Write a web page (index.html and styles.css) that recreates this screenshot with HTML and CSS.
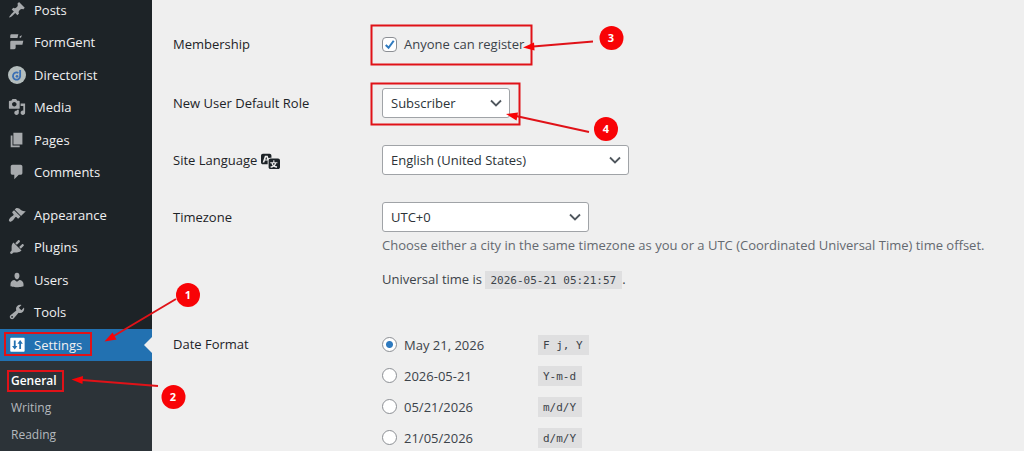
FILE: index.html
```html
<!DOCTYPE html>
<html lang="en">
<head>
<meta charset="utf-8">
<title>General Settings</title>
<link rel="stylesheet" href="styles.css">
</head>
<body>
<div class="page">
  <nav class="sidebar" aria-label="Main menu">
    <ul class="menu">
      <li><a href="#"><svg class="icon" viewBox="0 0 20 20"><path d="M10.44 3.02l1.82-1.82 6.36 6.35-1.83 1.82c-1.05-.68-2.48-.57-3.41.36l-.75.75c-.92.93-1.04 2.35-.35 3.41l-1.83 1.82-2.41-2.41-2.8 2.79c-.42.42-3.38 2.71-3.8 2.29s1.86-3.39 2.28-3.81l2.79-2.79L4.1 9.36l1.83-1.82c1.05.69 2.48.57 3.4-.36l.75-.75c.93-.92 1.05-2.35.36-3.41z"/></svg>Posts</a></li>
      <li><a href="#"><svg class="icon" viewBox="0 0 20 20"><path d="M4 1.500H11.500L10.500 5.500H2.500V3Q2.500 1.500 4 1.500zM13 3.500L15.500 2.500L14.500 5L13 5.500zM4 8.500H17L16 13H8.500V16.500Q8.500 18 7 18H2.500V10Q2.500 8.500 4 8.500z"/></svg>FormGent</a></li>
      <li><a href="#"><svg class="icon" viewBox="0 0 20 20"><circle class="disc" cx="10" cy="10" r="10"/><path class="ring" d="M13.500 4.500V11.500A4 4 0 1 1 11.500 7.700"/><circle class="blue" cx="10" cy="11.500" r="1.500"/></svg>Directorist</a></li>
      <li><a href="#"><svg class="icon" viewBox="0 0 20 20"><path d="M13 11V4c0-.55-.45-1-1-1h-1.670L9 1H5L3.670 3H2c-.55 0-1 .45-1 1v7c0 .55.45 1 1 1h10c.55 0 1-.45 1-1zM7 4.500c1.380 0 2.500 1.120 2.500 2.500S8.380 9.500 7 9.500 4.500 8.380 4.500 7 5.620 4.500 7 4.500zM14 6h5v10.500c0 1.380-1.120 2.500-2.500 2.500S14 17.880 14 16.500s1.120-2.500 2.500-2.500c.17 0 .34.020.5.050V9h-3V6zm-4 8.050V13h2v3.500c0 1.380-1.120 2.500-2.500 2.500S7 17.880 7 16.500 8.120 14 9.500 14c.17 0 .34.020.5.050z"/></svg>Media</a></li>
      <li><a href="#"><svg class="icon" viewBox="0 0 20 20"><path d="M6 15V2h10v13H6zm-1 1h8v2H3V5h2v11z"/></svg>Pages</a></li>
      <li><a href="#"><svg class="icon" viewBox="0 0 20 20"><path d="M5 2h9c1.100 0 2 .9 2 2v7c0 1.100-.9 2-2 2h-2l-5 5v-5H5c-1.100 0-2-.9-2-2V4c0-1.100.9-2 2-2z"/></svg>Comments</a></li>
    </ul>
    <ul class="menu">
      <li><a href="#"><svg class="icon" viewBox="0 0 20 20"><path d="M14.480 11.060L7.410 3.990l1.500-1.500c.5-.56 2.300-.47 3.510.32 1.210.8 1.430 1.280 2.910 2.100 1.180.64 2.450 1.260 4.450.85zm-.71.71L6.700 4.700 4.930 6.470c-.39.39-.39 1.020 0 1.410l1.060 1.060c.39.39.39 1.030 0 1.420-.6.600-1.430 1.110-2.210 1.690-.35.26-.7.530-1.010.84C1.430 14.230.400 16.080 1.400 17.070c.99 1 2.840-.03 4.180-1.360.31-.31.580-.66.850-1.020.57-.78 1.080-1.610 1.690-2.210.39-.39 1.020-.39 1.410 0l1.060 1.060c.39.39 1.020.39 1.410 0z"/></svg>Appearance</a></li>
      <li><a href="#"><svg class="icon" viewBox="0 0 20 20"><path d="M13.110 4.360L9.870 7.600 8 5.730l3.240-3.240c.35-.34 1.050-.2 1.560.32.520.51.660 1.210.31 1.550zm-8 1.770l.91-1.120 9.010 9.010-1.190.84c-.71.71-2.630 1.160-3.820 1.160H6.140L4.900 17.260c-.59.59-1.540.59-2.120 0-.59-.58-.59-1.530 0-2.120l1.240-1.240v-3.880c0-1.130.4-3.190 1.090-3.890zm7.260 3.970l3.240-3.240c.34-.35 1.040-.21 1.550.31.520.51.660 1.210.31 1.550l-3.240 3.250z"/></svg>Plugins</a></li>
      <li><a href="#"><svg class="icon" viewBox="0 0 20 20"><path d="M10 9.250c-2.270 0-2.730-3.440-2.730-3.440C7 4.020 7.820 2 9.970 2c2.160 0 2.980 2.020 2.710 3.810 0 0-.41 3.440-2.680 3.440zm0 2.570L12.720 10c2.390 0 4.520 2.330 4.520 4.530v2.490s-3.650 1.130-7.240 1.130c-3.650 0-7.240-1.130-7.240-1.130v-2.490c0-2.250 1.940-4.480 4.470-4.480z"/></svg>Users</a></li>
      <li><a href="#"><svg class="icon" viewBox="0 0 20 20"><path d="M16.680 9.770c-1.340 1.340-3.300 1.670-4.950.99l-5.410 6.520c-.99.99-2.590.99-3.580 0s-.99-2.590 0-3.570l6.520-5.420c-.68-1.650-.35-3.610.99-4.950 1.280-1.280 3.120-1.620 4.720-1.060l-2.890 2.890 2.820 2.820 2.860-2.870c.53 1.580.18 3.390-1.080 4.650zM3.810 16.210c.4.390 1.040.39 1.430 0 .4-.4.400-1.040 0-1.430-.39-.4-1.030-.4-1.430 0-.39.39-.39 1.030 0 1.430z"/></svg>Tools</a></li>
      <li class="current"><a href="#"><svg class="icon" viewBox="0 0 20 20"><rect x="2.500" y="2" width="16" height="15.500" rx="1"/><path class="arrows" d="M7.500 5V13M13.500 14.500V7"/><path class="tips" d="M4.500 11H10.500L7.500 15zM10.500 8.500H16.500L13.500 4.500z"/></svg>Settings</a></li>
    </ul>
    <ul class="submenu">
      <li><a class="active" href="#">General</a></li>
      <li><a href="#">Writing</a></li>
      <li><a href="#">Reading</a></li>
    </ul>
  </nav>
  <main class="content">
    <form class="form">
      <span class="heading">Membership</span>
      <div class="field first">
        <label class="choice"><input class="check" type="checkbox" checked>Anyone can register</label>
      </div>
      <label class="heading" for="role">New User Default Role</label>
      <div class="field"><select id="role" class="select role"><option>Subscriber</option></select></div>
      <label class="heading" for="lang">Site Language
        <svg class="translate" viewBox="0 0 20 20"><path d="M11 7H9.490c-.63 0-1.250.3-1.590.7L7 5H4.130l-2.390 7h1.690l.74-2H7v4H2c-1.100 0-2-.9-2-2V5c0-1.100.9-2 2-2h7c1.100 0 2 .9 2 2v2zM6.510 9H4.490l1-2.930zM10 8h8c1.100 0 2 .9 2 2v7c0 1.100-.9 2-2 2h-8c-1.100 0-2-.9-2-2v-7c0-1.100.9-2 2-2zm7.250 5v-1.080h-3.170V9.750h-1.160v2.170H9.750V13h1.280c.11.850.56 1.850 1.280 2.620-.87.360-1.890.620-2.310.620-.01.020.220.970.2 1.460.84 0 2.210-.5 3.280-1.150 1.090.65 2.480 1.150 3.340 1.150-.02-.49.200-1.440.2-1.460-.43 0-1.490-.27-2.380-.63.700-.77 1.140-1.770 1.250-2.610h1.360zm-3.810 1.930c-.5-.46-.85-1.130-1.010-1.930h2.090c-.17.800-.51 1.470-1 1.930l-.04.030s-.03-.020-.04-.03z"/></svg>
      </label>
      <div class="field"><select id="lang" class="select lang"><option>English (United States)</option></select></div>
      <label class="heading" for="zone">Timezone</label>
      <div class="field zone-field">
        <select id="zone" class="select zone"><option>UTC+0</option></select>
        <p class="hint">Choose either a city in the same timezone as you or a UTC (Coordinated Universal Time) time offset.</p>
        <p class="utc">Universal time is <code>2026-05-21 05:21:57</code>.</p>
      </div>
      <span class="heading">Date Format</span>
      <div class="field">
        <div class="format"><label class="choice"><input class="radio" type="radio" name="date" checked>May 21, 2026</label><code>F j, Y</code></div>
        <div class="format"><label class="choice"><input class="radio" type="radio" name="date">2026-05-21</label><code>Y-m-d</code></div>
        <div class="format"><label class="choice"><input class="radio" type="radio" name="date">05/21/2026</label><code>m/d/Y</code></div>
        <div class="format"><label class="choice"><input class="radio" type="radio" name="date">21/05/2026</label><code>d/m/Y</code></div>
      </div>
    </form>
  </main>
  <svg class="notes" width="1024" height="451" viewBox="0 0 1024 451">
    <g class="frames">
      <rect x="5" y="333" width="86" height="22"/>
      <rect x="8" y="371" width="55" height="20"/>
      <rect x="371.500" y="25.500" width="160" height="39"/>
      <rect x="371.500" y="83.500" width="148" height="41"/>
      <path d="M176 299L112 337M158 386L82 380M593 41.500L533 46.500M589 132L516 116"/>
    </g>
    <g class="heads">
      <path d="M104.500 341.500L112.500 332.500L116.500 339.500z"/>
      <path d="M71.500 379.500L83 376L82.500 384z"/>
      <path d="M523 47.500L534 42.500L534.500 50.500z"/>
      <path d="M506 114L518 112.500L516.500 120.500z"/>
      <circle cx="188" cy="295" r="12"/>
      <circle cx="173.500" cy="397" r="12"/>
      <circle cx="611.500" cy="38" r="12"/>
      <circle cx="606" cy="129" r="12"/>
    </g>
    <g class="numbers">
      <text x="188" y="299">1</text>
      <text x="173" y="401">2</text>
      <text x="611" y="42">3</text>
      <text x="606" y="133">4</text>
    </g>
  </svg>
</div>
</body>
</html>
```
FILE: styles.css
```css
* { box-sizing: border-box; }
body {
  margin: 0;
  background: #efefef;
  color: #3c434a;
  font: 13px/20px "Open Sans", "Noto Sans", sans-serif;
}
.page {
  position: relative;
  display: flex;
  height: 100vh;
  overflow: hidden;
}
.sidebar {
  flex: 0 0 152px;
  margin-top: -6px;
  background: #1d2327;
}
ul { margin: 0; padding: 0; list-style: none; }
.menu { margin-bottom: 10px; }
.menu:nth-of-type(2) { margin-bottom: 0; }
.menu li:nth-child(even) { padding-bottom: 1px; }
.menu a {
  display: flex;
  align-items: center;
  gap: 8px;
  height: 32px;
  padding-left: 8px;
  color: #f0f0f1;
  text-decoration: none;
}
.icon { width: 18px; height: 18px; fill: #a7aaad; }
.icon .disc { fill: #b4bdbd; }
.icon .blue { fill: #3a6fb5; }
.icon .ring { fill: none; stroke: #3a6fb5; stroke-width: 2; }
.current { position: relative; background: #2271b1; }
.current .icon { fill: #fff; }
.icon .arrows { stroke: #2271b1; stroke-width: 2; }
.icon .tips { fill: #2271b1; }
.current::after {
  content: "";
  position: absolute;
  right: 0;
  top: 8px;
  border: 8px solid transparent;
  border-left: 0;
  border-right-color: #efefef;
}
.submenu {
  height: 100%;
  padding-top: 6px;
  background: #2c3338;
}
.submenu a {
  display: block;
  padding-left: 11px;
  color: #b4b9be;
  font-size: 12px;
  line-height: 27px;
  text-decoration: none;
}
.submenu .active { color: #fff; font-weight: 600; }
.content { flex: 1; padding: 29px 20px 0 21px; }
.form {
  display: grid;
  grid-template-columns: 209px 1fr;
  row-gap: 27px;
}
.heading {
  display: flex;
  align-items: center;
  gap: 4px;
  height: 30px;
  color: #1d2327;
  font-weight: 500;
}
.translate { width: 19px; height: 19px; fill: #1d2327; }
.first { padding-bottom: 2px; }
.choice {
  display: flex;
  align-items: center;
  gap: 7px;
  height: 30px;
}
.check, .radio {
  appearance: none;
  width: 15px;
  height: 15px;
  margin: 0;
  border: 1px solid #8c8f94;
  background: #fff;
}
.check {
  border-radius: 4px;
  background: #fff url("data:image/svg+xml,%3Csvg xmlns='http://www.w3.org/2000/svg' viewBox='0 0 16 16'%3E%3Cpath d='M4 8.500l3 3 5.500-7.500' fill='none' stroke='%232f7abf' stroke-width='2.200'/%3E%3C/svg%3E") center / 15px no-repeat;
}
.radio { border-radius: 50%; }
.radio:checked { background: radial-gradient(circle, #2f7abf 3px, #fff 4px); }
.select {
  display: block;
  appearance: none;
  height: 30px;
  padding: 0 24px 0 8px;
  border: 1px solid #a0a3a7;
  border-radius: 3px;
  background: #fff url("data:image/svg+xml,%3Csvg xmlns='http://www.w3.org/2000/svg' viewBox='0 0 12 8'%3E%3Cpath d='M1 1.500l5 5 5-5' fill='none' stroke='%2350575e' stroke-width='1.800'/%3E%3C/svg%3E") right 7px center / 12px 8px no-repeat;
  color: #2c3338;
  font: inherit;
}
.role { width: 128px; }
.lang { width: 247px; }
.zone { width: 207px; }
.zone-field { padding-bottom: 13px; }
p { margin: 0; }
.hint { margin-top: 3px; color: #646970; }
.utc { margin-top: 14px; }
code {
  padding: 3px 6px 2px 5px;
  background: #dfdfe0;
  color: #3c434a;
  font: 11px/15px "DejaVu Sans Mono", monospace;
}
.format {
  display: grid;
  grid-template-columns: 156px max-content;
  align-items: center;
  height: 31px;
}
.notes { position: absolute; left: 0; top: 0; pointer-events: none; }
.frames { fill: none; stroke: #e01218; stroke-width: 2; }
.heads { fill: #f80306; }
.numbers {
  fill: #fff;
  font-size: 11px;
  font-weight: 700;
  text-anchor: middle;
}
```
